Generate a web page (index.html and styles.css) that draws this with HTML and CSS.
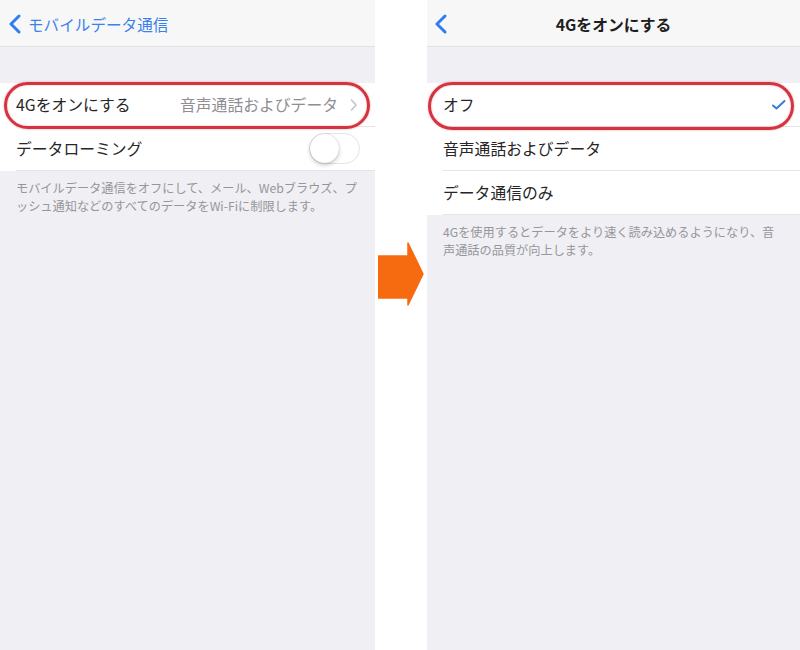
FILE: index.html
```html
<!DOCTYPE html>
<html lang="ja">
<head>
<meta charset="utf-8">
<title>4Gをオンにする</title>
<link rel="stylesheet" href="styles.css">
</head>
<body>
<div class="page">
  <section class="panel panel-left">
    <header class="nav nav-left">
      <svg class="back" width="14" height="20" viewBox="0 0 14 20"><path d="M11 2 L3 10 L11 18" fill="none" stroke="#2f7cf0" stroke-width="3" stroke-linecap="round" stroke-linejoin="round"/></svg>
      <span class="back-label">モバイルデータ通信</span>
    </header>
    <div class="spacer"></div>
    <div class="group">
      <div class="row">
        <span class="label">4Gをオンにする</span>
        <span class="value">音声通話およびデータ</span>
        <svg class="chev" width="8" height="14" viewBox="0 0 8 14"><path d="M1.5 2 L6 7 L1.5 12" fill="none" stroke="#c4c4c9" stroke-width="1.6" stroke-linecap="round" stroke-linejoin="round"/></svg>
      </div>
      <div class="row">
        <span class="label">データローミング</span>
        <span class="toggle"><span class="knob"></span></span>
      </div>
      <div class="oval oval-left"></div>
    </div>
    <p class="footnote">モバイルデータ通信をオフにして、メール、Webブラウズ、プ<br>ッシュ通知などのすべてのデータをWi-Fiに制限します。</p>
  </section>

  <div class="gap">
    <svg class="arrow" width="46" height="64" viewBox="0 0 46 64"><polygon points="0,14 30,14 30,1 45,32 30,63 30,56 0,56" fill="#f66b10" stroke="#f66b10" stroke-width="1.5" stroke-linejoin="round"/></svg>
  </div>

  <section class="panel panel-right">
    <header class="nav nav-right">
      <svg class="back" width="14" height="20" viewBox="0 0 14 20"><path d="M11 2 L3 10 L11 18" fill="none" stroke="#2f7cf0" stroke-width="3" stroke-linecap="round" stroke-linejoin="round"/></svg>
      <span class="title">4Gをオンにする</span>
      <span></span>
    </header>
    <div class="spacer"></div>
    <div class="group">
      <div class="row">
        <span class="label">オフ</span>
        <svg class="check" width="16" height="12" viewBox="0 0 16 12"><path d="M2 6.5 L5.5 9.5 L13.5 2" fill="none" stroke="#3a7bd5" stroke-width="2" stroke-linecap="round" stroke-linejoin="round"/></svg>
      </div>
      <div class="row">
        <span class="label">音声通話およびデータ</span>
      </div>
      <div class="row">
        <span class="label">データ通信のみ</span>
      </div>
      <div class="oval oval-right"></div>
    </div>
    <p class="footnote">4Gを使用するとデータをより速く読み込めるようになり、音<br>声通話の品質が向上します。</p>
  </section>
</div>
</body>
</html>
```

FILE: styles.css
```css
html, body {
  margin: 0;
  padding: 0;
  background: #ffffff;
}

body {
  font-family: "Noto Sans CJK JP", "Noto Sans", "Liberation Sans", sans-serif;
}

.page {
  display: flex;
  width: 800px;
  height: 650px;
  overflow: hidden;
}

.panel {
  background: #efeff4;
  height: 650px;
  display: flex;
  flex-direction: column;
}

.panel-left {
  width: 375px;
}

.panel-right {
  width: 373px;
}

.gap {
  width: 52px;
  background: #ffffff;
  padding-top: 242px;
  padding-left: 3px;
  box-sizing: border-box;
}

.arrow {
  display: block;
}

.nav {
  height: 46px;
  background: #f7f7f8;
  border-bottom: 1px solid #e2e2e6;
  box-sizing: content-box;
}

.nav-left {
  display: flex;
  align-items: center;
  padding-left: 8px;
  gap: 6px;
}

.nav-left .back {
  margin-top: 2px;
}

.back-label {
  color: #3a82ea;
  font-size: 15.6px;
  margin-top: 2px;
}

.nav-right {
  display: grid;
  grid-template-columns: 1fr auto 1fr;
  align-items: center;
  padding-left: 7px;
  padding-right: 7px;
}

.nav-right .back {
  margin-top: 2px;
}

.title {
  font-size: 15.8px;
  font-weight: 700;
  color: #1e1e1e;
  margin-top: 2px;
}

.spacer {
  height: 36px;
}

.group {
  position: relative;
  background: #ffffff;
}

.row {
  height: 44px;
  display: flex;
  align-items: center;
  margin-left: 16px;
  padding-right: 16px;
  border-bottom: 1px solid #e4e4e8;
  box-sizing: border-box;
}

.row:last-of-type {
  border-bottom: none;
}

.label {
  flex: 1;
  font-size: 15.8px;
  color: #262626;
}

.value {
  font-size: 15.8px;
  color: #8e8e93;
  margin-right: 12px;
}

.chev {
  display: block;
  margin-right: 1px;
}

.toggle {
  width: 49px;
  height: 29px;
  border: 1.5px solid #e3e3e8;
  border-radius: 16px;
  background: #ffffff;
  position: relative;
  margin-right: -1px;
}

.knob {
  position: absolute;
  left: 0;
  top: 0;
  width: 29px;
  height: 29px;
  border-radius: 50%;
  background: #ffffff;
  box-shadow: 0 2px 4px rgba(0, 0, 0, 0.22), 0 0 1px rgba(0, 0, 0, 0.25);
}

.check {
  display: block;
  margin-right: -3px;
}

.oval {
  position: absolute;
  top: -1px;
  height: 47px;
  border: 3px solid #d5333f;
  border-radius: 26px;
  box-sizing: border-box;
  box-shadow: 0 0 2px rgba(213, 51, 63, 0.5), inset 0 0 2px rgba(213, 51, 63, 0.4);
  pointer-events: none;
}

.oval-left {
  left: 4px;
  width: 366px;
}

.oval-right {
  left: 1px;
  width: 366px;
  height: 48px;
}

.footnote {
  margin: 0;
  padding: 8px 0 0 16px;
  font-size: 12.2px;
  line-height: 18px;
  color: #96969b;
  white-space: nowrap;
}
```
